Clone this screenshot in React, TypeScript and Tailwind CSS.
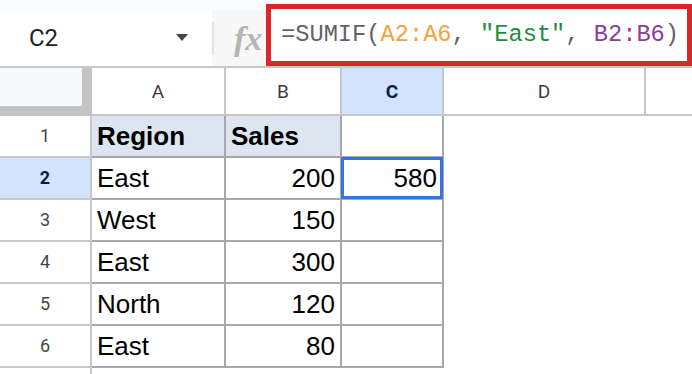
import React from "react";

const LIGHT = "border-[#c7c7c7]";
const DARK = "border-[#a8a8a8]";

type Cell = { text?: string; bold?: boolean; align?: "left" | "right"; bg?: string };

const rows: { n: number; a: Cell; b: Cell; c: Cell; sel?: boolean }[] = [
  { n: 1, a: { text: "Region", bold: true }, b: { text: "Sales", bold: true, align: "left" }, c: {} },
  { n: 2, a: { text: "East" }, b: { text: "200", align: "right" }, c: { text: "580", align: "right" }, sel: true },
  { n: 3, a: { text: "West" }, b: { text: "150", align: "right" }, c: {} },
  { n: 4, a: { text: "East" }, b: { text: "300", align: "right" }, c: {} },
  { n: 5, a: { text: "North" }, b: { text: "120", align: "right" }, c: {} },
  { n: 6, a: { text: "East" }, b: { text: "80", align: "right" }, c: {} },
];

function DataCell({ cell, width, bg }: { cell: Cell; width: string; bg: string }) {
  return (
    <div
      className={`${width} ${bg} h-full border-r-2 border-b-2 ${DARK} flex items-center px-[5px] ${
        cell.align === "right" ? "justify-end" : "justify-start"
      }`}
    >
      {cell.text ? (
        <span className={`text-[26px] leading-none text-black ${cell.bold ? "font-bold" : ""}`}>{cell.text}</span>
      ) : null}
    </div>
  );
}

export default function App() {
  return (
    <div
      className="w-[692px] h-[374px] overflow-hidden bg-white"
      style={{ fontFamily: '"Liberation Sans", Arial, sans-serif' }}
    >
      {/* Top bar: name box + formula bar */}
      <div className="flex h-[66px] bg-[#f9fbfd]">
        <div className="mt-[10px] w-[212px] bg-white flex items-center pl-[29px] pr-[24px] justify-between">
          <span className="text-[24px] leading-none text-[#1f1f1f]" style={{ fontFamily: "Roboto, sans-serif" }}>
            C2
          </span>
          <svg width="12" height="8" viewBox="0 0 12 8">
            <path d="M0 0 L12 0 L6 7 Z" fill="#444746" />
          </svg>
        </div>
        <div className="mt-[10px] w-[54px] bg-[#f7f7f7] flex items-center">
          <div className="w-[2px] h-[33px] bg-[#dde3ea]" />
          <span
            className="ml-[20px] mt-[2px] text-[34px] leading-none italic font-bold text-[#b5b5b5]"
            style={{ fontFamily: '"Liberation Serif", serif' }}
          >
            fx
          </span>
        </div>
        <div className="mt-[4px] flex-1 border-[5px] border-[#d9262a] bg-white flex items-center pl-[10px] overflow-hidden">
          <span
            className="text-[23.7px] leading-none whitespace-pre text-[#5f6368]"
            style={{ fontFamily: '"Liberation Mono", monospace' }}
          >
            =SUMIF(<span className="text-[#f4a23c]">A2:A6</span>, <span className="text-[#1e8e3e]">"East"</span>,{" "}
            <span className="text-[#8a3ca0]">B2:B6</span>)
          </span>
        </div>
      </div>

      {/* Column header row */}
      <div className={`flex h-[50px] border-t-2 ${LIGHT}`} style={{ fontFamily: "Roboto, sans-serif" }}>
        <div className="w-[92px] h-full bg-[#f8f9fa] border-r-[10px] border-b-[10px] border-[#c4c4c4]" />
        {[
          { l: "A", w: "w-[134px]" },
          { l: "B", w: "w-[116px]" },
          { l: "C", w: "w-[102px]", sel: true },
          { l: "D", w: "w-[202px]" },
        ].map((c) => (
          <div
            key={c.l}
            className={`${c.w} h-full border-r-2 border-b-2 ${LIGHT} flex items-center justify-center ${
              c.sel ? "bg-[#d3e3fd]" : "bg-white"
            }`}
          >
            <span
              className={`text-[19px] leading-none ${c.sel ? "font-bold text-[#041e49]" : "text-[#3c3c3c]"}`}
            >
              {c.l}
            </span>
          </div>
        ))}
        <div className={`flex-1 h-full border-b-2 ${LIGHT} bg-white`} />
      </div>

      {/* Data rows */}
      {rows.map((r) => (
        <div key={r.n} className="flex h-[42px]">
          <div
            className={`w-[92px] h-full border-r-2 border-b-2 ${LIGHT} flex items-center justify-center ${
              r.sel ? "bg-[#d3e3fd]" : "bg-white"
            }`}
            style={{ fontFamily: "Roboto, sans-serif" }}
          >
            <span className={`text-[18px] leading-none ${r.sel ? "font-bold text-[#041e49]" : "text-[#444746]"}`}>
              {r.n}
            </span>
          </div>
          <DataCell cell={r.a} width="w-[134px]" bg={r.n === 1 ? "bg-[#dde5f0]" : "bg-white"} />
          <DataCell cell={r.b} width="w-[116px]" bg={r.n === 1 ? "bg-[#dde5f0]" : "bg-white"} />
          <div className="relative w-[102px] h-full">
            <DataCell cell={r.c} width="w-[102px]" bg="bg-white" />
            {r.sel ? (
              <div className="absolute left-[-1px] top-[-1px] w-[102px] h-[42px] border-[3px] border-[#3574e3]" />
            ) : null}
          </div>
          <div className="flex-1 h-full bg-white" />
        </div>
      ))}

      {/* Partial row 7 */}
      <div className="flex h-[6px]">
        <div className={`w-[92px] h-full border-r-2 ${LIGHT} bg-white`} />
        <div className="flex-1 bg-white" />
      </div>
    </div>
  );
}
